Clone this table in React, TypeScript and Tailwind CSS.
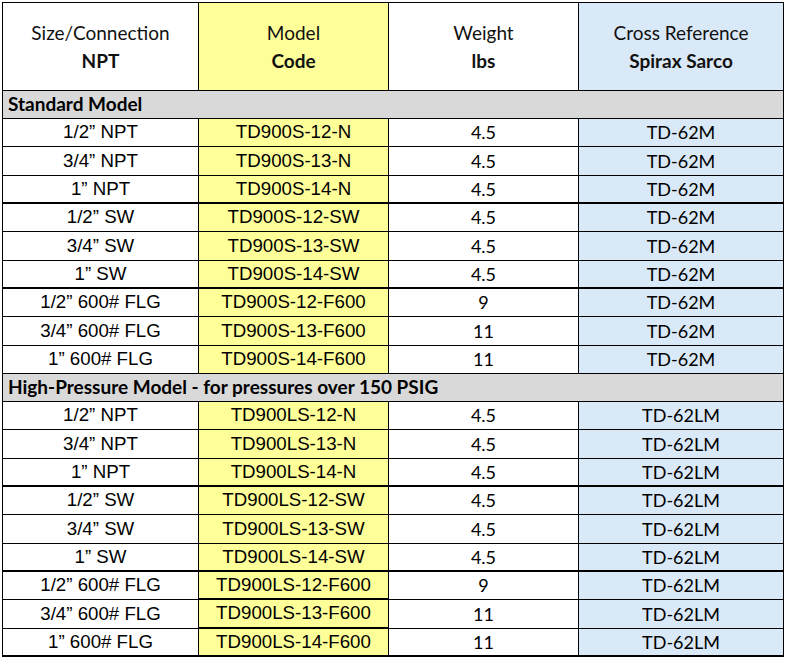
const aptos = "font-['Lato','Open_Sans',sans-serif]";
const arial = "font-['Liberation_Sans',Arial,sans-serif] text-[18.7px]";

type Row = { size: string; code: string; weight: string; ref: string };

const standard: Row[] = [
  { size: "1/2” NPT", code: "TD900S-12-N", weight: "4.5", ref: "TD-62M" },
  { size: "3/4” NPT", code: "TD900S-13-N", weight: "4.5", ref: "TD-62M" },
  { size: "1” NPT", code: "TD900S-14-N", weight: "4.5", ref: "TD-62M" },
  { size: "1/2” SW", code: "TD900S-12-SW", weight: "4.5", ref: "TD-62M" },
  { size: "3/4” SW", code: "TD900S-13-SW", weight: "4.5", ref: "TD-62M" },
  { size: "1” SW", code: "TD900S-14-SW", weight: "4.5", ref: "TD-62M" },
  { size: "1/2” 600# FLG", code: "TD900S-12-F600", weight: "9", ref: "TD-62M" },
  { size: "3/4” 600# FLG", code: "TD900S-13-F600", weight: "11", ref: "TD-62M" },
  { size: "1” 600# FLG", code: "TD900S-14-F600", weight: "11", ref: "TD-62M" },
];

const highPressure: Row[] = [
  { size: "1/2” NPT", code: "TD900LS-12-N", weight: "4.5", ref: "TD-62LM" },
  { size: "3/4” NPT", code: "TD900LS-13-N", weight: "4.5", ref: "TD-62LM" },
  { size: "1” NPT", code: "TD900LS-14-N", weight: "4.5", ref: "TD-62LM" },
  { size: "1/2” SW", code: "TD900LS-12-SW", weight: "4.5", ref: "TD-62LM" },
  { size: "3/4” SW", code: "TD900LS-13-SW", weight: "4.5", ref: "TD-62LM" },
  { size: "1” SW", code: "TD900LS-14-SW", weight: "4.5", ref: "TD-62LM" },
  { size: "1/2” 600# FLG", code: "TD900LS-12-F600", weight: "9", ref: "TD-62LM" },
  { size: "3/4” 600# FLG", code: "TD900LS-13-F600", weight: "11", ref: "TD-62LM" },
  { size: "1” 600# FLG", code: "TD900LS-14-F600", weight: "11", ref: "TD-62LM" },
];

// row heights so the gridlines land where the sheet draws them
const heights = ["h-[28px]", "h-[29px]", "h-[28px]", "h-[28px]", "h-[29px]", "h-[28px]", "h-[28px]", "h-[29px]", "h-[28px]"];

function HeaderCell({ top, bottom, width, bg }: { top: string; bottom: string; width: string; bg: string }) {
  return (
    <div className={`${width} ${bg} border-r border-b border-black flex flex-col items-center justify-center text-[19px] leading-[28px] text-[#111] pt-[1px] ${aptos}`}>
      <span>{top}</span>
      <span className="font-bold">{bottom}</span>
    </div>
  );
}

function GroupRow({ label }: { label: string }) {
  return (
    <div className={`h-[28px] bg-[#d9d9d9] border-r border-b border-black flex items-center pl-[5px] text-[19px] font-bold text-black whitespace-nowrap ${aptos}`}>
      {label}
    </div>
  );
}

function DataRows({ rows, last }: { rows: Row[]; last?: boolean }) {
  return (
    <>
      {rows.map((r, i) => {
        const thick = i === 2 || i === 5 || (last && i === 8);
        const line = thick ? "border-b-2" : "border-b";
        const codeLine = last && (i === 6 || i === 7) ? "border-b-2" : line;
        return (
          <div key={r.code} className={`flex ${heights[i]} text-[18px] text-black`}>
            <div className={`w-[196px] border-r ${line} border-black flex items-center justify-center ${arial}`}>{r.size}</div>
            <div className={`w-[190px] bg-[#ffff99] border-r ${codeLine} border-black flex items-center justify-center ${arial}`}>{r.code}</div>
            <div className={`w-[190px] border-r ${line} border-black flex items-center justify-center ${aptos}`}>{r.weight}</div>
            <div className={`w-[205px] bg-[#dae9f8] border-r ${line} border-black flex items-center justify-center ${aptos}`}>{r.ref}</div>
          </div>
        );
      })}
    </>
  );
}

export default function App() {
  return (
    <div className="w-[788px] h-[662px] bg-white overflow-hidden pt-[2px] pl-[2px]">
      <div className="w-[782px] border-l border-t border-black">
        <div className="flex h-[88px]">
          <HeaderCell top="Size/Connection" bottom="NPT" width="w-[196px]" bg="bg-white" />
          <HeaderCell top="Model" bottom="Code" width="w-[190px]" bg="bg-[#ffff99]" />
          <HeaderCell top="Weight" bottom="lbs" width="w-[190px]" bg="bg-white" />
          <HeaderCell top="Cross Reference" bottom="Spirax Sarco" width="w-[205px]" bg="bg-[#dae9f8]" />
        </div>
        <GroupRow label="Standard Model" />
        <DataRows rows={standard} />
        <GroupRow label="High-Pressure Model - for pressures over 150 PSIG" />
        <DataRows rows={highPressure} last />
      </div>
    </div>
  );
}
